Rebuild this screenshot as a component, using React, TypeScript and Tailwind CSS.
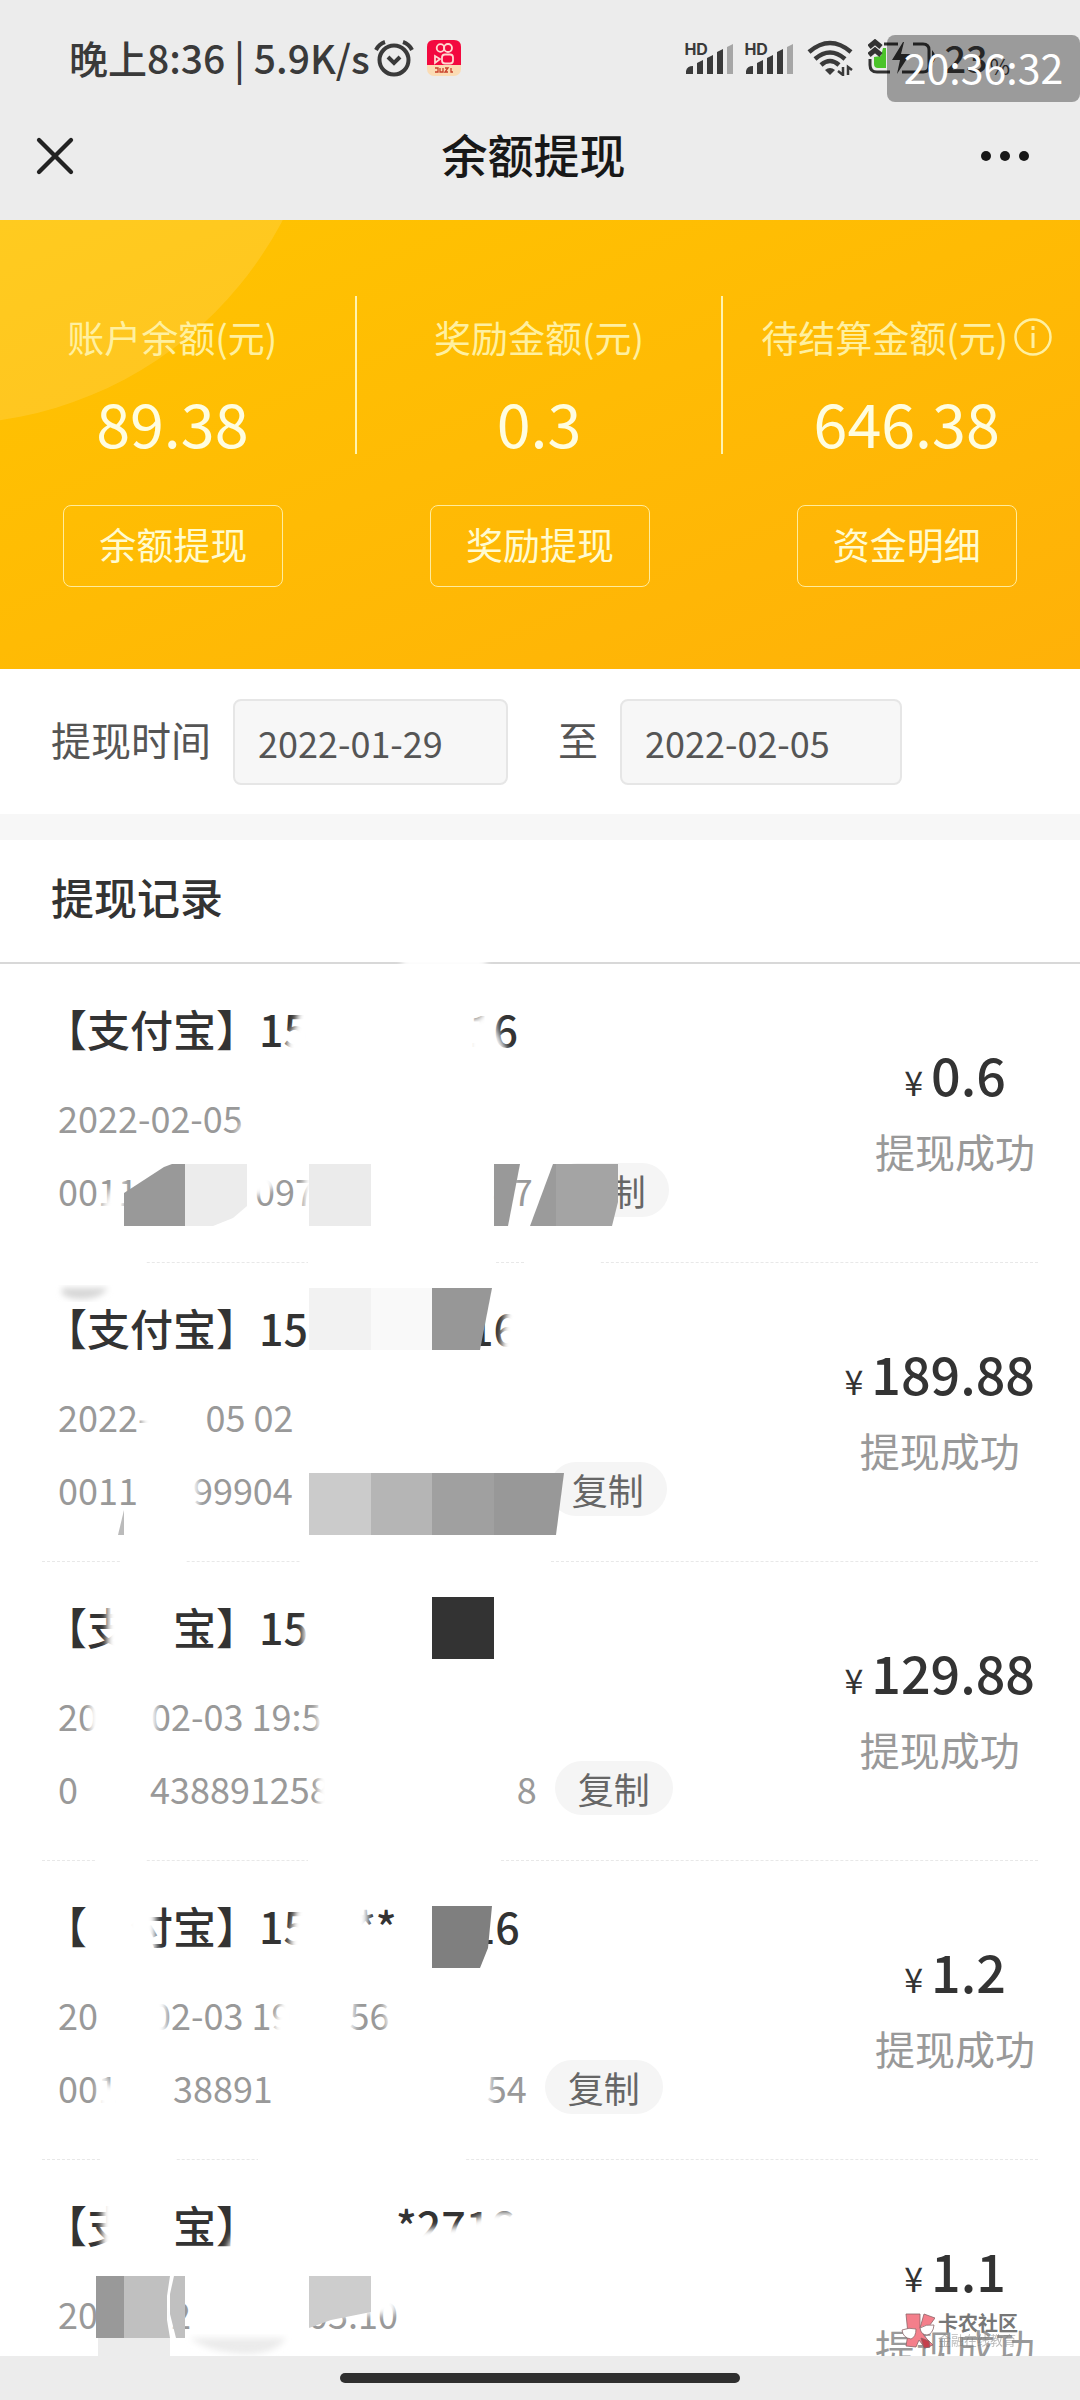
import React from 'react';
import { X } from 'lucide-react';

// A line is made of visible text and blank stretches (numbers, in px)
type Piece = string | number;

interface WithdrawRecord {
  id: string;
  title: Piece[];
  date: Piece[];
  serial: Piece[];
  amount: string;
  smudge: React.ReactNode;
}

const balances = [
  { label: '账户余额(元)', value: '89.38', action: '余额提现', info: false },
  { label: '奖励金额(元)', value: '0.3', action: '奖励提现', info: false },
  { label: '待结算金额(元)', value: '646.38', action: '资金明细', info: true },
];

const records: WithdrawRecord[] = [
  {
    id: 'r1',
    title: ['【支付宝】15', 161, '16'],
    date: ['2022-02-05'],
    serial: ['0011', 117, '097', 178, '47'],
    amount: '0.6',
    smudge: (
      <>
        <g fill="#fff" filter="url(#soft)">
          <rect x="402" y="-8" width="84" height="12" />
          <path d="M299 40h14v60h-28l2-26 8-12z" />
          <path d="M468 88v-34l10 0 8-12h12l-2 22 6 14 8 14v8h-35z" />
          <path d="M246 152l0 28h-14l4-10z" />
          <path d="M98 250l12-24 14-10v40h-26z" />
          <path d="M250 208h20l6 14-16 10h-10z" />
          <rect x="304" y="205" width="12" height="48" />
          <path d="M490 205h24l-2 48h-22z" />
        </g>
        <path d="M42 296h103v4H42zM308 296h187v4H308zM525 296h75v4h-75z" fill="#fff" />
        <path d="M124 229l40-26 8-3h13v62h-61z" fill="#999" />
        <path d="M185 200h62v42l-14 12-20 8h-28z" fill="#ececec" />
        <rect x="309" y="200" width="62" height="62" fill="#ebebeb" />
        <path d="M494 200h26l-12 62h-14z" fill="#999" />
        <path d="M553 200h3v62h-26z" fill="#9b9b9b" />
        <path d="M556 200h62v38l-6 24h-56z" fill="#a4a4a4" />
      </>
    ),
  },
  {
    id: 'r2',
    title: ['【支付宝】15', 161, '16'],
    date: ['2022-', 55, '05 02'],
    serial: ['0011', 55, '99904', 238],
    amount: '189.88',
    smudge: (
      <>
        <g fill="#fff" filter="url(#soft)">
          <path d="M508 40h16v60h-22v-30z" />
          <rect x="142" y="140" width="20" height="34" />
          <rect x="190" y="205" width="8" height="48" />
        </g>
        <path d="M120 296h65v4h-65zM300 296h250v4H300z" fill="#fff" />
        <path d="M62 25h46q-8 11-26 11-14 0-20-5z" fill="#d6d6d6" filter="url(#soft)" />
        <rect x="309" y="25" width="62" height="62" fill="#f2f2f2" />
        <rect x="371" y="25" width="61" height="62" fill="#f9f9f9" />
        <path d="M432 25h60l-12 62h-48z" fill="#979797" />
        <path d="M124 247v25h-6z" fill="#bbb" />
        <rect x="309" y="210" width="62" height="62" fill="#cbcbcb" />
        <rect x="371" y="210" width="61" height="62" fill="#b5b5b5" />
        <rect x="432" y="210" width="62" height="62" fill="#a0a0a0" />
        <path d="M494 210h70l-8 62h-62z" fill="#989898" />
      </>
    ),
  },
  {
    id: 'r3',
    title: ['【支', 43, '宝】15'],
    date: ['20', 53, '02-03 19:5'],
    serial: ['0', 72, '438891258', 187, '8'],
    amount: '129.88',
    smudge: (
      <>
        <g fill="#fff" filter="url(#soft)">
          <rect x="107" y="38" width="36" height="62" />
          <rect x="303" y="56" width="12" height="40" />
          <rect x="90" y="136" width="14" height="44" />
          <rect x="145" y="136" width="11" height="44" />
          <rect x="317" y="136" width="14" height="44" />
          <rect x="318" y="206" width="18" height="48" />
        </g>
        <path d="M95 296h50v4H95zM308 296h192v4H308z" fill="#fff" />
        <rect x="432" y="35" width="62" height="62" fill="#333" />
      </>
    ),
  },
  {
    id: 'r4',
    title: ['【', 43, '付宝】15', 47, '**', 74, '16'],
    date: ['20', 53, '02-03 19', 58, '56'],
    serial: ['001', 55, '38891', 214, '54'],
    amount: '1.2',
    smudge: (
      <>
        <g fill="#fff" filter="url(#soft)">
          <rect x="126" y="38" width="30" height="62" />
          <path d="M298 38h18v62h-26l0-26z" />
          <rect x="350" y="40" width="18" height="40" />
          <rect x="146" y="136" width="20" height="44" />
          <path d="M282 136h14v44h-22v-18z" />
          <rect x="345" y="136" width="9" height="44" />
          <path d="M384 140h14v40h-10z" />
          <path d="M98 214l8 0 2 10h14v34h-24z" />
          <rect x="482" y="206" width="9" height="48" />
        </g>
        <path d="M100 296h75v4h-75zM258 296h207v4H258z" fill="#fff" />
        <path d="M432 45h60l-4 42-8 20h-48z" fill="#7f7f7f" />
      </>
    ),
  },
  {
    id: 'r5',
    title: ['【支', 43, '宝】', 137, '*2716'],
    date: ['20', 53, '02', 117, '05:10'],
    serial: [],
    amount: '1.1',
    smudge: (
      <>
        <g fill="#fff" filter="url(#soft)">
          <rect x="102" y="38" width="38" height="62" />
          <path d="M232 76l8 0v30h-20z" />
          <path d="M390 72l70-6 30-14h40v50h-140z" />
          <path d="M306 116h90v38l-86 4z" />
          <rect x="140" y="136" width="34" height="44" />
        </g>
        <rect x="96" y="116" width="28" height="62" fill="#999" />
        <path d="M124 116h46l-3 20v24l3 18h-46z" fill="#c0c0c0" />
        <path d="M174 116h11v62h-9l-6-24v-20z" fill="#c0c0c0" />
        <path d="M309 116h62v36l-40 8-22 8z" fill="#cdcdcd" />
        <rect x="98" y="178" width="72" height="20" fill="#ececec" />
        <path d="M190 178h96q-10 16-42 16-36-2-54-16z" fill="#ebebeb" filter="url(#soft)" />
      </>
    ),
  },
];

function Line({ pieces }: { pieces: Piece[] }) {
  return (
    <span className="flex">
      {pieces.map((piece, i) =>
        typeof piece === 'number' ? (
          <span key={i} className="shrink-0" style={{ width: piece }} />
        ) : (
          <span key={i} className="whitespace-pre">{piece}</span>
        )
      )}
    </span>
  );
}

function Signal() {
  return (
    <div className="relative h-[34px] w-[50px]">
      <span className="absolute left-0 top-0 font-['Inter'] text-[16px] font-bold leading-[16px]">HD</span>
      <svg viewBox="0 0 50 34" className="h-full w-full" fill="#3a3a3a">
        <path d="M2 33v-3q1-5 7-5v8z" />
        <path d="M13 33V22l6-3v14z" />
        <path d="M23 33V17l6-3v19z" />
        <path d="M33 33V11l6-3v25z" />
        <path d="M43 33V6l6-3v30z" fill="#a6a6a6" />
      </svg>
    </div>
  );
}

function StatusBar() {
  return (
    <div className="relative flex h-[92px] items-center justify-between pl-[69px] pr-[70px] pt-[24px] text-[#3a3a3a]">
      <div className="flex items-center">
        <span className="pb-[2px] text-[39px] font-medium leading-[44px]">晚上8:36 | 5.9K/s</span>
        <svg viewBox="0 0 40 38" className="ml-1 h-[38px] w-[40px]" fill="none" stroke="#3a3a3a" strokeWidth="4">
          <circle cx="20" cy="21" r="14.5" />
          <path d="M2 11Q5 5 11 3M38 11Q35 5 29 3" strokeWidth="4" />
          <path d="M14 18l6 6 6-6" />
        </svg>
        <svg viewBox="0 0 34 36" className="ml-[13px] h-[36px] w-[34px]">
          <rect width="34" height="36" rx="7" fill="#fbdcb4" />
          <path d="M0 25V7q0-7 7-7h20q7 0 7 7v18z" fill="#f3093f" />
          <g fill="none" stroke="#ffd9d0" strokeWidth="1.8">
            <circle cx="13.500" cy="8" r="3.800" />
            <circle cx="21" cy="8" r="4" />
            <rect x="15" y="14.500" width="11" height="9" rx="3" />
            <path d="M8 16l5 3-5 4z" />
          </g>
          <path d="M8 28h3v4H8M13 28v4h3v-4M18 28h3l-3 4h3M24 28v4h2" stroke="#c8402a" strokeWidth="1.300" fill="none" />
        </svg>
      </div>
      <div className="flex items-center">
        <Signal />
        <div className="ml-[10px]">
          <Signal />
        </div>
        <svg viewBox="0 0 46 36" className="ml-[13px] h-[36px] w-[46px]" fill="none" stroke="#3a3a3a" strokeWidth="4.500">
          <path d="M2 12Q23-6 44 12" />
          <path d="M8 19Q23 6 38 19" />
          <path d="M14 25Q23 17 32 25" />
          <path d="M18 30q5-4 10 0l-5 5z" fill="#3a3a3a" stroke="none" />
          <path d="M36 27v8l-5-4M41 35v-8l4 3" strokeWidth="2.500" />
        </svg>
        <svg viewBox="0 0 68 38" className="ml-[15px] h-[38px] w-[68px]">
          <path d="M2 20v6q0 7 7 7h13M34 33h21q6 0 6-6V11q0-6-6-6h-10M16 5h14" fill="none" stroke="#333" strokeWidth="3" />
          <path d="M65 14q3 4 0 8z" fill="#333" stroke="#333" strokeWidth="2" />
          <path d="M6 18l7-1 2-8h3v20H10q-4 0-4-4z" fill="#4bc42a" />
          <path d="M1 8l6-5 6 5M1 16l6-5 6 5" fill="none" stroke="#333" strokeWidth="5" />
          <path d="M35 3L24 21h8l-3 14 13-20h-9l3-12z" fill="#333" />
        </svg>
        <span className="ml-2 pb-[2px] text-[38px] font-medium leading-[44px]">23</span>
        <span className="ml-0.5 self-end text-[22px] leading-[32px]">%</span>
      </div>
      <div className="absolute right-0 top-[35px] flex h-[67px] w-[193px] items-center justify-center rounded-lg bg-black/34 pb-[6px] text-[41px] leading-[48px] text-white">
        20:36:32
      </div>
    </div>
  );
}

function Watermark() {
  return (
    <div className="absolute bottom-[7px] right-[62px] flex items-start text-[#777]">
      <svg viewBox="0 0 34 36" className="h-[36px] w-[34px]" stroke="#8b6468" strokeWidth="0.800">
        <path d="M5 1h14v14l4-14 11 4-8 11-4 5 4 5 6 6-8 3-6-8-3 7-10-1 2-12z" fill="#f47f8b" />
        <path d="M1 17q7-3 14-1 0 8-5 10-8-1-9-9z" fill="#fff" />
        <path d="M19 15q6-4 14-3-1 9-7 10-6 0-7-7z" fill="#fff" />
        <path d="M20 25l8 3 1 6-6 1z" fill="#c53f4c" />
      </svg>
      <div className="ml-[3px] flex flex-col">
        <span className="text-[20px] font-bold leading-[20px]">卡农社区</span>
        <span className="text-[13px] leading-[14px] opacity-50">金融在线教育</span>
      </div>
    </div>
  );
}

function RecordItem({ record }: { record: WithdrawRecord }) {
  return (
    <li className="relative flex h-[299px] justify-between border-b border-dashed border-[#e8e8e8]">
      <div className="pt-[34px]">
        <h3 className="pl-[2px] text-[43px] font-medium leading-[60px] text-[#333]">
          <Line pieces={record.title} />
        </h3>
        <p className="mt-[35px] pl-[16px] text-[36px] leading-[48px] text-[#999]">
          <Line pieces={record.date} />
        </p>
        {record.serial.length > 0 && (
          <div className="mt-[22px] flex items-center pl-[16px] text-[36px] leading-[54px] text-[#999]">
            <Line pieces={record.serial} />
            <button type="button" className="ml-[18px] rounded-full bg-[#f5f5f5] px-[23px] text-[#666]">
              复制
            </button>
          </div>
        )}
      </div>
      <div className="flex flex-col items-center pr-[3px] pt-[75px]">
        <p className="flex items-baseline gap-[8px] leading-[70px] text-[#333]">
          <span className="text-[34px]">¥</span>
          <span className="text-[52px] font-medium">{record.amount}</span>
        </p>
        <p className="mt-[6px] text-[40px] leading-[56px] text-[#999]">提现成功</p>
      </div>
      {/* strokes rubbed over the private digits */}
      <svg className="pointer-events-none absolute -left-[42px] top-0 h-[299px] w-[700px] overflow-visible" viewBox="0 0 700 299" aria-hidden="true">
        {record.smudge}
      </svg>
    </li>
  );
}

function App() {
  return (
    <div className="flex h-screen flex-col overflow-hidden bg-white font-['Noto_Sans_CJK_SC',sans-serif]">
      <svg className="absolute h-0 w-0" aria-hidden="true">
        <filter id="soft" x="-20%" y="-20%" width="140%" height="140%">
          <feGaussianBlur stdDeviation="3" />
        </filter>
      </svg>

      <header className="bg-[#ececec]">
        <StatusBar />
        <div className="flex h-[128px] items-center">
          <button type="button" aria-label="关闭" className="flex w-[95px] items-center pl-[23px] text-[#222]">
            <X size={64} strokeWidth={1.6} />
          </button>
          <h1 className="flex-1 pb-[6px] text-center text-[46px] font-medium leading-[60px] text-[#181818]">余额提现</h1>
          <button type="button" aria-label="更多" className="flex w-[108px] items-center gap-[9px] pl-[9px]">
            <span className="h-[10px] w-[10px] rounded-full bg-[#181818]" />
            <span className="h-[10px] w-[10px] rounded-full bg-[#181818]" />
            <span className="h-[10px] w-[10px] rounded-full bg-[#181818]" />
          </button>
        </div>
      </header>

      <section className="relative h-[449px] shrink-0 overflow-hidden bg-linear-to-br from-[#ffc400] to-[#ffb108]">
        <div className="absolute -left-[434px] -top-[556px] h-[760px] w-[760px] rounded-full bg-white/12" />
        <div className="relative -mx-[10px] grid grid-cols-3 pt-[76px]">
          {balances.map((item, i) => (
            <div key={item.action} className="flex flex-col items-center">
              <div className={`flex h-[158px] w-full flex-col items-center pt-[15px] ${i < 2 ? 'border-r-2 border-[#fff3b0]' : ''}`}>
                <p className="flex items-center gap-[6px] text-[37px] leading-[52px] text-[#fff0a0]">
                  {item.label}
                  {item.info && (
                    <svg viewBox="0 0 38 38" className="h-[38px] w-[38px]" fill="none" stroke="currentColor" strokeWidth="2.500">
                      <circle cx="19" cy="19" r="17.500" />
                      <path d="M19 15v15M19 8v4" strokeWidth="3" />
                    </svg>
                  )}
                </p>
                <p className="mt-[19px] text-[61px] leading-[80px] text-[#fffde0]">{item.value}</p>
              </div>
              <button
                type="button"
                className="mt-[51px] h-[82px] w-[220px] rounded-lg border border-[#ffec9c] pb-[5px] text-[37px] leading-[52px] text-[#fffbd0]"
              >
                {item.action}
              </button>
            </div>
          ))}
        </div>
      </section>

      <form className="flex h-[145px] shrink-0 items-center pl-[51px] text-[#555]">
        <label htmlFor="from" className="pb-[6px] text-[40px] leading-[54px]">提现时间</label>
        <input
          id="from"
          type="text"
          defaultValue="2022-01-29"
          className="ml-[22px] h-[86px] w-[275px] rounded-lg border-2 border-[#e6e6e6] bg-[#f7f7f7] px-[23px] text-[36px]"
        />
        <label htmlFor="to" className="ml-[50px] pb-[6px] text-[40px] leading-[54px]">至</label>
        <input
          id="to"
          type="text"
          defaultValue="2022-02-05"
          className="ml-[22px] h-[86px] w-[282px] rounded-lg border-2 border-[#e6e6e6] bg-[#f7f7f7] px-[23px] text-[36px]"
        />
      </form>

      <div className="h-[26px] shrink-0 bg-[#f7f7f7]" />

      <h2 className="flex h-[124px] shrink-0 items-center border-b-2 border-[#d8d8d8] pb-[10px] pl-[51px] text-[43px] font-medium leading-[60px] text-[#333]">
        提现记录
      </h2>

      <main className="relative min-h-0 flex-1">
        <div className="h-full [clip-path:inset(-10px_0_0_0)]">
          <ul className="mx-[42px]">
            {records.map(record => (
              <RecordItem key={record.id} record={record} />
            ))}
          </ul>
        </div>
        <Watermark />
      </main>

      <footer className="flex h-[44px] shrink-0 justify-center bg-[#ececec] pt-[17px]">
        <div className="h-[10px] w-[400px] rounded-full bg-[#2f2f2f]" />
      </footer>
    </div>
  );
}

export default App;
